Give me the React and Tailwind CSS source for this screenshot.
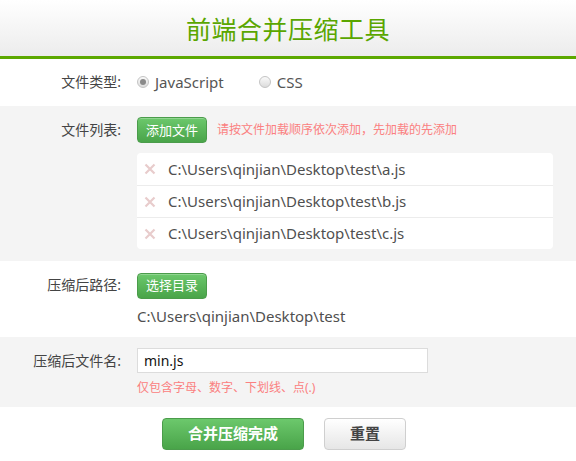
import { useState } from "react";

const files = [
  "C:\\Users\\qinjian\\Desktop\\test\\a.js",
  "C:\\Users\\qinjian\\Desktop\\test\\b.js",
  "C:\\Users\\qinjian\\Desktop\\test\\c.js",
];

function GreenButton({ children }) {
  return (
    <button
      type="button"
      className="h-[26px] w-[70px] rounded-[4px] border border-[#4b9c4b] bg-gradient-to-b from-[#6cc86c] to-[#49a449] text-[13px] leading-none text-white shadow-[inset_0_1px_0_rgba(255,255,255,0.25)]"
    >
      {children}
    </button>
  );
}

function Radio({ checked, label, onClick }) {
  return (
    <label className="flex cursor-pointer items-center gap-[6px]" onClick={onClick}>
      <span className="flex h-[12px] w-[12px] items-center justify-center rounded-full border border-[#c4c4c4] bg-gradient-to-b from-[#fafafa] to-[#dcdcdc]">
        {checked && <span className="h-[6px] w-[6px] rounded-full bg-[#8a8a8a]" />}
      </span>
      <span className="text-[15px] text-[#555]">{label}</span>
    </label>
  );
}

function Row({ label, children, gray, className = "" }) {
  return (
    <div className={`flex ${gray ? "bg-[#f4f4f4]" : "bg-white"} ${className}`}>
      <div className="w-[122px] shrink-0 pr-[1px] text-right text-[14px] leading-[26px] text-[#444]">
        {label}
      </div>
      <div className="ml-[15px] flex-1 pr-[23px]">{children}</div>
    </div>
  );
}

export default function App() {
  const [type, setType] = useState("js");

  return (
    <div className="w-[576px] bg-white font-['Noto_Sans','Noto_Sans_CJK_SC',sans-serif]">
      {/* header */}
      <div className="flex h-[56px] items-center justify-center bg-gradient-to-b from-white to-[#ececec]">
        <h1 className="font-['Noto_Sans_CJK_SC',serif] text-[25px] leading-none tracking-[0.5px] text-[#5aa600]">
          前端合并压缩工具
        </h1>
      </div>
      <div className="h-[3px] bg-[#5ca800]" />

      {/* file type */}
      <Row label="文件类型:" className="pb-[11px] pt-[10px]">
        <div className="flex h-[26px] items-center gap-[35px]">
          <Radio checked={type === "js"} label="JavaScript" onClick={() => setType("js")} />
          <Radio checked={type === "css"} label="CSS" onClick={() => setType("css")} />
        </div>
      </Row>

      {/* file list */}
      <Row label="文件列表:" gray className="pb-[12px] pt-[11px]">
        <div className="flex items-center gap-[10px]">
          <GreenButton>添加文件</GreenButton>
          <span className="text-[12px] text-[#fb8080]">请按文件加载顺序依次添加，先加载的先添加</span>
        </div>
        <ul className="mt-[10px] w-[416px] rounded-[4px] bg-white">
          {files.map((f, i) => (
            <li
              key={f}
              className={`flex h-[32px] items-center ${i > 0 ? "border-t border-[#ececec]" : ""}`}
            >
              <svg className="ml-[7px] h-[12px] w-[12px] shrink-0" viewBox="0 0 12 12">
                <path d="M1.5 1.5 L10.5 10.5 M10.5 1.5 L1.5 10.5" stroke="#e8cccc" strokeWidth="2.2" />
              </svg>
              <span className="ml-[12px] text-[15px] text-[#4f4f4f]">{f}</span>
            </li>
          ))}
        </ul>
      </Row>

      {/* output dir */}
      <Row label="压缩后路径:" className="pb-[9px] pt-[11px]">
        <GreenButton>选择目录</GreenButton>
        <div className="mt-[5px] text-[15px] leading-[24px] text-[#4f4f4f]">
          C:\Users\qinjian\Desktop\test
        </div>
      </Row>

      {/* output name */}
      <Row label="压缩后文件名:" gray className="pb-[8px] pt-[11px]">
        <input
          defaultValue="min.js"
          className="h-[25px] w-[291px] border border-[#dcdcdc] bg-white pl-[6px] text-[14px] text-[#111] outline-none"
        />
        <div className="mt-[4px] text-[12px] leading-[22px] text-[#fb8080]">
          仅包含字母、数字、下划线、点(.)
        </div>
      </Row>

      {/* actions */}
      <div className="flex justify-center gap-[20px] pr-[8px] pt-[11px]">
        <button
          type="button"
          className="h-[32px] w-[142px] rounded-[4px] border border-[#4b9c4b] bg-gradient-to-b from-[#6cc86c] to-[#49a449] text-[15px] font-bold text-white"
        >
          合并压缩完成
        </button>
        <button
          type="button"
          className="h-[32px] w-[82px] rounded-[4px] border border-[#cfcfcf] bg-gradient-to-b from-white to-[#e6e6e6] text-[15px] font-bold text-[#444]"
        >
          重置
        </button>
      </div>
    </div>
  );
}
